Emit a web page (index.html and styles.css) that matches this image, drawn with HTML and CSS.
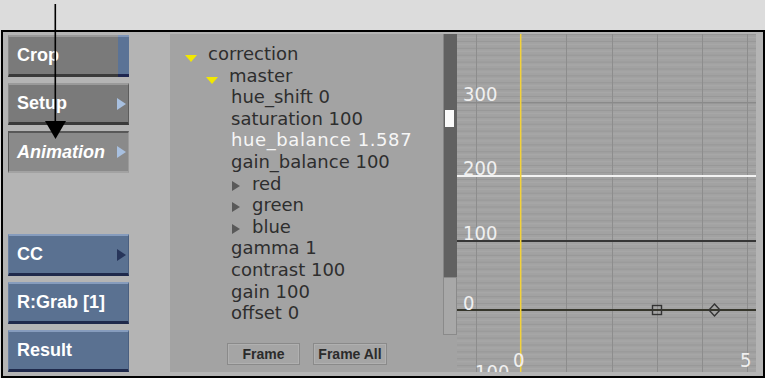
FILE: index.html
```html
<!DOCTYPE html>
<html lang="en">

<head>
    <meta charset="UTF-8">
    <meta name="viewport" content="width=device-width, initial-scale=1.0">
    <title>Animation</title>
    <link rel="stylesheet" href="styles.css">
</head>

<body>
    <div class="top-band"></div>

    <div class="frame">
        <div class="menu">
            <div class="menu-group">
                <div class="menu-btn gray">Crop<span class="stripe"></span></div>
                <div class="menu-btn gray">Setup<span class="arrow light"></span></div>
                <div class="menu-btn pressed">Animation<span class="arrow light"></span></div>
            </div>
            <div class="menu-group">
                <div class="menu-btn blue">CC<span class="arrow dark"></span></div>
                <div class="menu-btn blue">R:Grab [1]</div>
                <div class="menu-btn blue">Result</div>
            </div>
        </div>

        <div class="tree">
            <div class="node lvl0"><span class="caret open"></span>correction</div>
            <div class="node lvl1"><span class="caret open"></span>master</div>
            <div class="node leaf">hue_shift 0</div>
            <div class="node leaf">saturation 100</div>
            <div class="node leaf active">hue_balance 1.587</div>
            <div class="node leaf">gain_balance 100</div>
            <div class="node sub"><span class="caret closed"></span>red</div>
            <div class="node sub"><span class="caret closed"></span>green</div>
            <div class="node sub"><span class="caret closed"></span>blue</div>
            <div class="node leaf">gamma 1</div>
            <div class="node leaf">contrast 100</div>
            <div class="node leaf">gain 100</div>
            <div class="node leaf">offset 0</div>

            <div class="tree-actions">
                <button class="frame-btn">Frame</button>
                <button class="frame-btn wide">Frame All</button>
            </div>
        </div>

        <div class="scrollbar">
            <div class="track">
                <div class="thumb"></div>
            </div>
            <div class="track-rest"></div>
        </div>

        <svg class="graph" width="299" height="338" viewBox="0 0 299 338">
            <defs>
                <pattern id="rows" width="299" height="6.9" patternUnits="userSpaceOnUse">
                    <rect width="299" height="1" fill="#979797" />
                    <rect y="3" width="299" height="1" fill="#a9a9a9" />
                </pattern>
            </defs>
            <rect width="299" height="338" fill="#a2a2a2" />
            <rect width="299" height="338" fill="url(#rows)" />

            <!-- frame grid -->
            <g stroke="#8d8d8d" stroke-width="1">
                <line x1="19.5" y1="0" x2="19.5" y2="338" />
                <line x1="109.5" y1="0" x2="109.5" y2="338" />
                <line x1="155.5" y1="0" x2="155.5" y2="338" />
                <line x1="200.5" y1="0" x2="200.5" y2="338" />
                <line x1="245.5" y1="0" x2="245.5" y2="338" />
                <line x1="290.5" y1="0" x2="290.5" y2="338" />
            </g>
            <line x1="0" y1="68.5" x2="299" y2="68.5" stroke="#8a8a8a" stroke-width="1" />

            <!-- curves -->
            <line x1="0" y1="142" x2="299" y2="142" stroke="#f2f2f2" stroke-width="2" />
            <line x1="0" y1="207" x2="299" y2="207" stroke="#363636" stroke-width="2" />
            <line x1="0" y1="276" x2="299" y2="276" stroke="#35352b" stroke-width="2" />
            <line x1="63.7" y1="0" x2="63.7" y2="338" stroke="#f3d23a" stroke-width="1.5" />

            <!-- keys -->
            <rect x="195.5" y="271.5" width="9" height="9" fill="none" stroke="#333" stroke-width="1.4" />
            <polygon points="257.5,270 263,276 257.5,282 252,276" fill="none" stroke="#333" stroke-width="1.4" />

            <g class="axis">
                <text x="6" y="67">300</text>
                <text x="6" y="141">200</text>
                <text x="6" y="206">100</text>
                <text x="6" y="276">0</text>
                <text x="56" y="333">0</text>
                <text x="18" y="345">100</text>
                <text x="283" y="333">5</text>
            </g>
        </svg>
    </div>

    <svg class="pointer" width="80" height="145" viewBox="0 0 80 145">
        <line x1="55.3" y1="4" x2="55.3" y2="124" stroke="#000" stroke-width="1.6" />
        <polygon points="45,121 66,121 55.5,139" fill="#000" />
    </svg>
</body>

</html>
```

FILE: styles.css
```css
body {
    margin: 0;
    width: 765px;
    height: 378px;
    overflow: hidden;
    background-color: #dcdcdc;
    font-family: "Liberation Sans", Arial, sans-serif;
}

.top-band {
    height: 30px;
}

.frame {
    margin-left: 1px;
    width: 748px;
    height: 338px;
    border: 2px solid #000;
    background-color: #b4b4b4;
    display: flex;
    padding: 2px 7px 4px 5px;
}

/* left menu */
.menu {
    width: 121px;
    margin-top: 1px;
    margin-right: 41px;
    display: flex;
    flex-direction: column;
    justify-content: space-between;
}

.menu-group {
    display: flex;
    flex-direction: column;
    gap: 6px;
}

.menu-btn {
    height: 42px;
    box-sizing: border-box;
    display: flex;
    align-items: center;
    padding-left: 8px;
    color: #fff;
    font-weight: bold;
    font-size: 18px;
    border-top: 2px solid;
    border-bottom: 3px solid;
    border-left: 1px solid;
    border-right: 1px solid;
}

.menu-btn.gray {
    background-color: #7a7a7a;
    border-color: #9a9a9a #5c5c5c #3a3a3a #8a8a8a;
}

.menu-btn.pressed {
    background-color: #8a8a8a;
    font-style: italic;
    border-bottom-width: 2px;
    border-color: #585858 #9c9c9c #a2a2a2 #585858;
}

.menu-btn.blue {
    background-color: #5a7191;
    border-color: #869cbd #4a5f80 #1f294b #6a80a2;
}

.stripe {
    margin-left: auto;
    align-self: stretch;
    width: 11px;
    margin-top: -2px;
    margin-bottom: -3px;
    margin-right: -1px;
    background-color: #5b7396;
    border-top: 2px solid #7e95b8;
    border-bottom: 3px solid #1e2650;
    box-sizing: border-box;
}

.arrow {
    margin-left: auto;
    margin-right: 2px;
    width: 0;
    height: 0;
    border-top: 6px solid transparent;
    border-bottom: 6px solid transparent;
    border-left: 9px solid;
}

.arrow.light {
    border-left-color: #a8c0e0;
}

.arrow.dark {
    border-left-color: #27355a;
}

/* channel tree */
.tree {
    width: 273px;
    background-color: #a3a3a3;
    display: flex;
    flex-direction: column;
    padding-top: 9px;
    box-sizing: border-box;
    font-family: "DejaVu Sans", sans-serif;
    font-size: 18px;
    line-height: 21.6px;
    color: #2e2e2e;
}

.node {
    display: flex;
    align-items: flex-start;
    white-space: nowrap;
}

.node.lvl0 {
    padding-left: 15px;
}

.node.lvl1 {
    padding-left: 36px;
}

.node.leaf {
    padding-left: 61px;
}

.node.sub {
    padding-left: 62px;
}

.node.active {
    color: #f6f6f6;
    letter-spacing: 0.6px;
}

.caret {
    width: 0;
    height: 0;
}

.caret.open {
    margin-top: 12px;
    margin-right: 11px;
    border-left: 6.5px solid transparent;
    border-right: 6.5px solid transparent;
    border-top: 7px solid #f2e800;
}

.caret.closed {
    margin-top: 8px;
    margin-right: 12px;
    border-top: 5px solid transparent;
    border-bottom: 5px solid transparent;
    border-left: 8px solid #595959;
}

.tree-actions {
    margin-top: auto;
    margin-bottom: 7px;
    padding-left: 57px;
    display: flex;
    gap: 13px;
}

.frame-btn {
    width: 73px;
    height: 22px;
    padding: 0;
    background-color: #a5a5a5;
    border: 1px solid #8a8a8a;
    box-shadow: inset 0 0 0 1px #b0b0b0;
    font-family: "Liberation Sans", Arial, sans-serif;
    font-weight: bold;
    font-size: 14px;
    color: #2b2b2b;
}

.frame-btn.wide {
    width: 74px;
}

/* scrollbar */
.scrollbar {
    width: 14px;
    display: flex;
    flex-direction: column;
    background-color: #a3a3a3;
}

.track {
    height: 243px;
    background-color: #616161;
    border-left: 1px solid #858585;
    padding-top: 76px;
    box-sizing: border-box;
}

.thumb {
    width: 9px;
    height: 17px;
    margin-left: 1px;
    background-color: #fafafa;
}

.track-rest {
    height: 58px;
    box-sizing: border-box;
    border: 1px solid #8a8a8a;
    background-color: #a8a8a8;
}

/* curve graph */
.graph {
    display: block;
}

.axis text {
    font-family: "DejaVu Sans Condensed", "DejaVu Sans", sans-serif;
    font-stretch: condensed;
    font-size: 20px;
    fill: #f0f0f0;
}

.pointer {
    position: absolute;
    left: 0;
    top: 0;
    pointer-events: none;
}
```
